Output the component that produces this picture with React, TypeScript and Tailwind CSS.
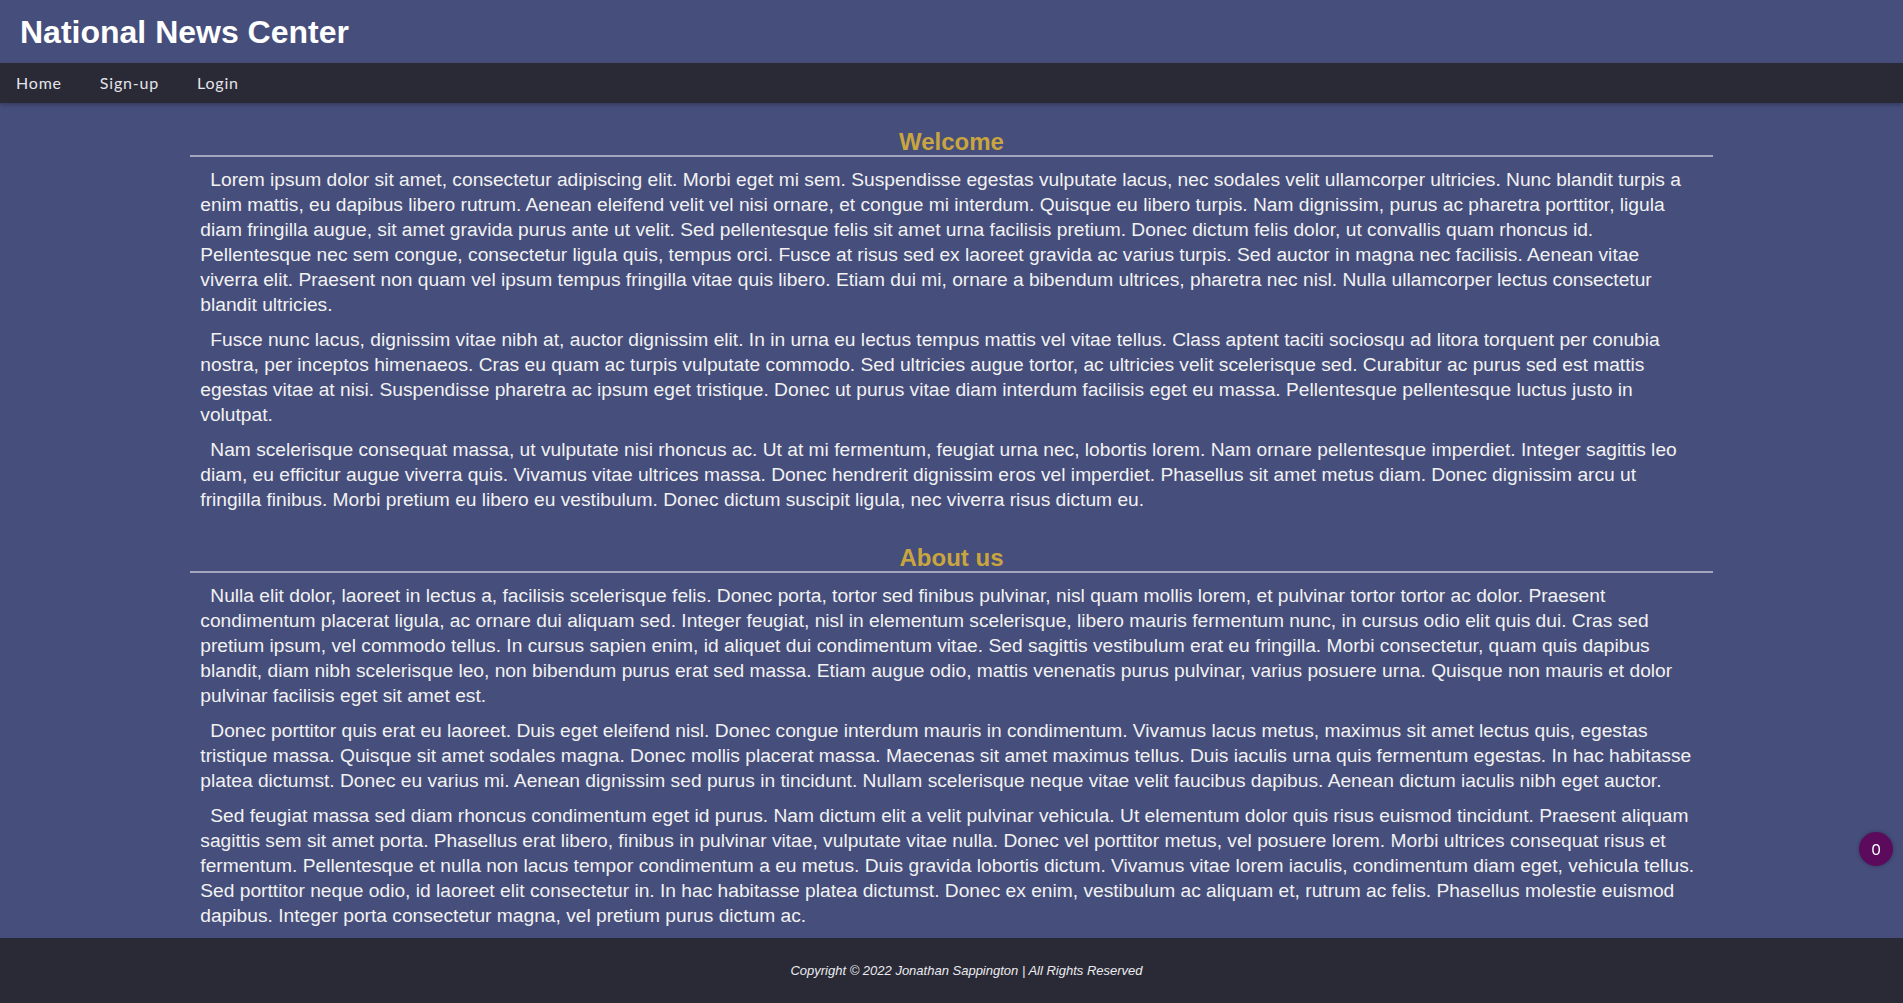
import React from 'react';

interface Section {
  title: string;
  paragraphs: string[];
}

const sections: Section[] = [
  {
    title: 'Welcome',
    paragraphs: [
      'Lorem ipsum dolor sit amet, consectetur adipiscing elit. Morbi eget mi sem. Suspendisse egestas vulputate lacus, nec sodales velit ullamcorper ultricies. Nunc blandit turpis a enim mattis, eu dapibus libero rutrum. Aenean eleifend velit vel nisi ornare, et congue mi interdum. Quisque eu libero turpis. Nam dignissim, purus ac pharetra porttitor, ligula diam fringilla augue, sit amet gravida purus ante ut velit. Sed pellentesque felis sit amet urna facilisis pretium. Donec dictum felis dolor, ut convallis quam rhoncus id. Pellentesque nec sem congue, consectetur ligula quis, tempus orci. Fusce at risus sed ex laoreet gravida ac varius turpis. Sed auctor in magna nec facilisis. Aenean vitae viverra elit. Praesent non quam vel ipsum tempus fringilla vitae quis libero. Etiam dui mi, ornare a bibendum ultrices, pharetra nec nisl. Nulla ullamcorper lectus consectetur blandit ultricies.',
      'Fusce nunc lacus, dignissim vitae nibh at, auctor dignissim elit. In in urna eu lectus tempus mattis vel vitae tellus. Class aptent taciti sociosqu ad litora torquent per conubia nostra, per inceptos himenaeos. Cras eu quam ac turpis vulputate commodo. Sed ultricies augue tortor, ac ultricies velit scelerisque sed. Curabitur ac purus sed est mattis egestas vitae at nisi. Suspendisse pharetra ac ipsum eget tristique. Donec ut purus vitae diam interdum facilisis eget eu massa. Pellentesque pellentesque luctus justo in volutpat.',
      'Nam scelerisque consequat massa, ut vulputate nisi rhoncus ac. Ut at mi fermentum, feugiat urna nec, lobortis lorem. Nam ornare pellentesque imperdiet. Integer sagittis leo diam, eu efficitur augue viverra quis. Vivamus vitae ultrices massa. Donec hendrerit dignissim eros vel imperdiet. Phasellus sit amet metus diam. Donec dignissim arcu ut fringilla finibus. Morbi pretium eu libero eu vestibulum. Donec dictum suscipit ligula, nec viverra risus dictum eu.',
    ],
  },
  {
    title: 'About us',
    paragraphs: [
      'Nulla elit dolor, laoreet in lectus a, facilisis scelerisque felis. Donec porta, tortor sed finibus pulvinar, nisl quam mollis lorem, et pulvinar tortor tortor ac dolor. Praesent condimentum placerat ligula, ac ornare dui aliquam sed. Integer feugiat, nisl in elementum scelerisque, libero mauris fermentum nunc, in cursus odio elit quis dui. Cras sed pretium ipsum, vel commodo tellus. In cursus sapien enim, id aliquet dui condimentum vitae. Sed sagittis vestibulum erat eu fringilla. Morbi consectetur, quam quis dapibus blandit, diam nibh scelerisque leo, non bibendum purus erat sed massa. Etiam augue odio, mattis venenatis purus pulvinar, varius posuere urna. Quisque non mauris et dolor pulvinar facilisis eget sit amet est.',
      'Donec porttitor quis erat eu laoreet. Duis eget eleifend nisl. Donec congue interdum mauris in condimentum. Vivamus lacus metus, maximus sit amet lectus quis, egestas tristique massa. Quisque sit amet sodales magna. Donec mollis placerat massa. Maecenas sit amet maximus tellus. Duis iaculis urna quis fermentum egestas. In hac habitasse platea dictumst. Donec eu varius mi. Aenean dignissim sed purus in tincidunt. Nullam scelerisque neque vitae velit faucibus dapibus. Aenean dictum iaculis nibh eget auctor.',
      'Sed feugiat massa sed diam rhoncus condimentum eget id purus. Nam dictum elit a velit pulvinar vehicula. Ut elementum dolor quis risus euismod tincidunt. Praesent aliquam sagittis sem sit amet porta. Phasellus erat libero, finibus in pulvinar vitae, vulputate vitae nulla. Donec vel porttitor metus, vel posuere lorem. Morbi ultrices consequat risus et fermentum. Pellentesque et nulla non lacus tempor condimentum a eu metus. Duis gravida lobortis dictum. Vivamus vitae lorem iaculis, condimentum diam eget, vehicula tellus. Sed porttitor neque odio, id laoreet elit consectetur in. In hac habitasse platea dictumst. Donec ex enim, vestibulum ac aliquam et, rutrum ac felis. Phasellus molestie euismod dapibus. Integer porta consectetur magna, vel pretium purus dictum ac.',
    ],
  },
];

const navLinks = ['Home', 'Sign-up', 'Login'];

export default function App() {
  return (
    <div className="min-h-screen bg-[#464e7c] font-['Liberation_Sans',Arial,sans-serif] text-[#f2f2f2]">
      {/* Title bar */}
      <header className="h-[63px] flex items-center px-5">
        <h1 className="text-[32px] leading-none font-bold text-white">National News Center</h1>
      </header>

      {/* Navigation */}
      <nav className="h-10 bg-[#292a36] flex items-center pl-4 gap-[38px] font-['Lato',sans-serif] text-[16px] tracking-[0.8px] text-[#e4e4ea] shadow-[0_2px_4px_rgba(0,0,0,0.25)]">
        {navLinks.map((link) => (
          <a key={link} href="#" className="hover:text-white">
            {link}
          </a>
        ))}
      </nav>

      {/* Main content */}
      <main className="w-[80%] mx-auto">
        {sections.map((section, idx) => (
          <section key={section.title}>
            <h2
              className={`${idx > 0 ? 'mt-[31px]' : 'mt-6'} pt-[2px] text-center text-[24px] leading-[26px] font-bold text-[#c9a53f] border-b-2 border-[#a3a6bd]`}
            >
              {section.title}
            </h2>
            {section.paragraphs.map((p, i) => (
              <p key={i} className="my-[10px] pl-[10px] pr-[14px] indent-[10px] text-[19.2px] leading-[25px]">
                {p}
              </p>
            ))}
          </section>
        ))}
      </main>

      {/* Footer */}
      <footer className="h-[65px] bg-[#292a36] flex items-center justify-center pl-[30px]">
        <p className="text-[13px] italic text-[#ececf0]">
          Copyright © 2022 Jonathan Sappington | All Rights Reserved
        </p>
      </footer>

      {/* Floating counter badge */}
      <div className="fixed right-[10px] top-[832px] w-[34px] h-[34px] rounded-full bg-[#5c0b5c] flex items-center justify-center font-['Lato',sans-serif] text-[15px] text-white shadow-[0_0_4px_rgba(0,0,0,0.3)]">
        0
      </div>
    </div>
  );
}
